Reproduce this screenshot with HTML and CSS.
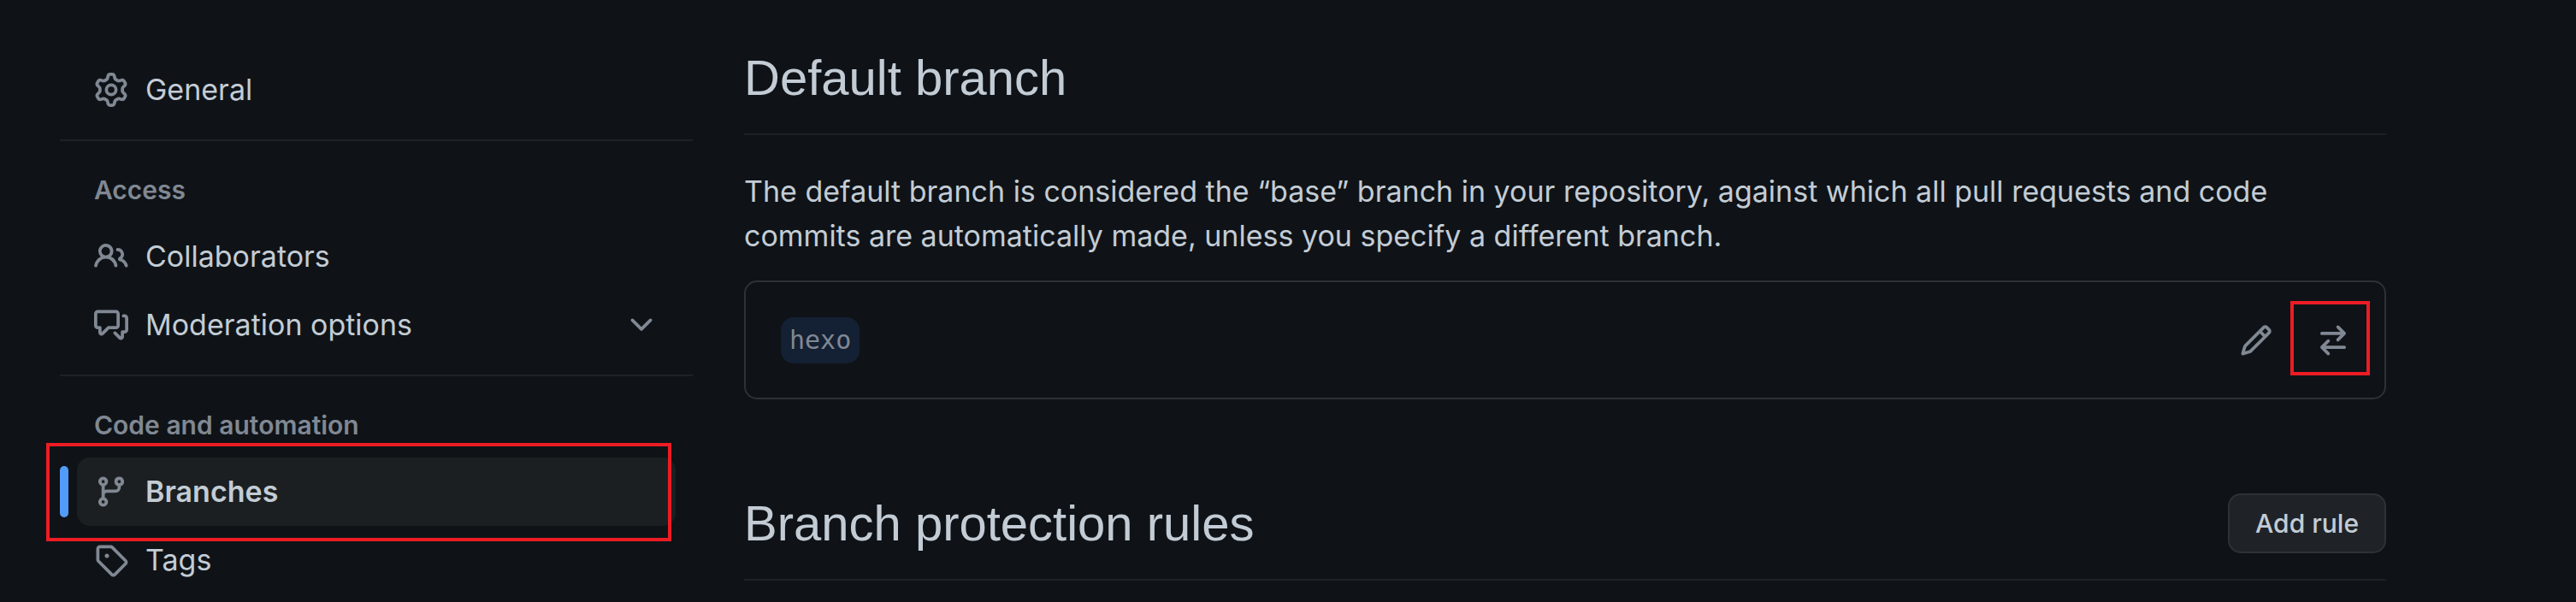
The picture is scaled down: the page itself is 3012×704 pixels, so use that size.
FILE: index.html
```html
<!DOCTYPE html>
<html lang="en">
<head>
<meta charset="utf-8">
<meta name="viewport" content="width=device-width, initial-scale=1">
<title>Branches</title>
<link rel="stylesheet" href="styles.css">
</head>
<body>
<div class="layout">
  <nav class="sidebar" aria-label="Settings">
    <ul class="nav-list">
      <li>
        <a class="nav-item" href="#general">
          <svg class="icon" viewBox="0 0 16 16" aria-hidden="true"><path d="M8 0a8.2 8.2 0 0 1 .701.031C9.444.095 9.99.645 10.16 1.29l.288 1.107c.018.066.079.158.212.224.231.114.454.243.668.386.123.082.233.09.299.071l1.103-.303c.644-.176 1.392.021 1.82.63.27.385.506.792.704 1.218.315.675.111 1.422-.364 1.891l-.814.806c-.049.048-.098.147-.088.294.016.257.016.515 0 .772-.01.147.038.246.088.294l.814.806c.475.469.679 1.216.364 1.891a7.977 7.977 0 0 1-.704 1.217c-.428.61-1.176.807-1.82.63l-1.102-.302c-.067-.019-.177-.011-.3.071a5.909 5.909 0 0 1-.668.386c-.133.066-.194.158-.211.224l-.29 1.106c-.168.646-.715 1.196-1.458 1.26a8.006 8.006 0 0 1-1.402 0c-.743-.064-1.289-.614-1.458-1.26l-.289-1.106c-.018-.066-.079-.158-.212-.224a5.738 5.738 0 0 1-.668-.386c-.123-.082-.233-.09-.299-.071l-1.103.303c-.644.176-1.392-.021-1.82-.63a8.12 8.12 0 0 1-.704-1.218c-.315-.675-.111-1.422.363-1.891l.815-.806c.05-.048.098-.147.088-.294a6.214 6.214 0 0 1 0-.772c.01-.147-.038-.246-.088-.294l-.815-.806C.635 6.045.431 5.298.746 4.623a7.92 7.92 0 0 1 .704-1.217c.428-.61 1.176-.807 1.82-.63l1.102.302c.067.019.177.011.3-.071.214-.143.437-.272.668-.386.133-.066.194-.158.211-.224l.29-1.106C6.009.645 6.556.095 7.299.03 7.53.01 7.764 0 8 0Zm-.571 1.525c-.036.003-.108.036-.137.146l-.289 1.105c-.147.561-.549.967-.998 1.189-.173.086-.34.183-.5.29-.417.278-.97.423-1.529.27l-1.103-.303c-.109-.03-.175.016-.195.045-.22.312-.412.644-.573.99-.014.031-.021.11.059.19l.815.806c.411.406.562.957.53 1.456a4.709 4.709 0 0 0 0 .582c.032.499-.119 1.05-.53 1.456l-.815.806c-.081.08-.073.159-.059.19.162.346.353.677.573.989.02.03.085.076.195.046l1.102-.303c.56-.153 1.113-.008 1.53.27.161.107.328.204.501.29.447.222.85.629.997 1.189l.289 1.105c.029.109.101.143.137.146a6.6 6.6 0 0 0 1.142 0c.036-.003.108-.036.137-.146l.289-1.105c.147-.561.549-.967.998-1.189.173-.086.34-.183.5-.29.417-.278.97-.423 1.529-.27l1.103.303c.109.029.175-.016.195-.045.22-.313.411-.644.573-.99.014-.031.021-.11-.059-.19l-.815-.806c-.411-.406-.562-.957-.53-1.456a4.709 4.709 0 0 0 0-.582c-.032-.499.119-1.05.53-1.456l.815-.806c.081-.08.073-.159.059-.19a6.464 6.464 0 0 0-.573-.989c-.02-.03-.085-.076-.195-.046l-1.102.303c-.56.153-1.113.008-1.53-.27a4.44 4.44 0 0 0-.501-.29c-.447-.222-.85-.629-.997-1.189l-.289-1.105c-.029-.11-.101-.143-.137-.146a6.6 6.6 0 0 0-1.142 0ZM11 8a3 3 0 1 1-6 0 3 3 0 0 1 6 0ZM9.5 8a1.5 1.5 0 1 0-3.001.001A1.5 1.5 0 0 0 9.5 8Z"/></svg>
          <span>General</span>
        </a>
      </li>
    </ul>
    <section class="nav-group">
      <h3 class="nav-title">Access</h3>
      <ul class="nav-list">
        <li>
          <a class="nav-item" href="#collaborators">
            <svg class="icon" viewBox="0 0 16 16" aria-hidden="true"><path d="M2 5.5a3.5 3.5 0 1 1 5.898 2.549 5.508 5.508 0 0 1 3.034 4.084.75.75 0 1 1-1.482.235 4 4 0 0 0-7.9 0 .75.75 0 0 1-1.482-.236A5.507 5.507 0 0 1 3.102 8.05 3.493 3.493 0 0 1 2 5.5ZM11 4a3.001 3.001 0 0 1 2.22 5.018 5.01 5.01 0 0 1 2.56 3.012.749.749 0 0 1-.885.954.752.752 0 0 1-.549-.514 3.507 3.507 0 0 0-2.522-2.372.75.75 0 0 1-.574-.73v-.352a.75.75 0 0 1 .416-.672A1.5 1.5 0 0 0 11 5.5.75.75 0 0 1 11 4Zm-5.5-.5a2 2 0 1 0-.001 3.999A2 2 0 0 0 5.5 3.5Z"/></svg>
            <span>Collaborators</span>
          </a>
        </li>
        <li>
          <button class="nav-item" type="button" aria-expanded="false">
            <svg class="icon" viewBox="0 0 16 16" aria-hidden="true"><path d="M1.75 1h8.5c.966 0 1.75.784 1.75 1.75v5.5A1.75 1.75 0 0 1 10.25 10H7.061l-2.574 2.573A1.458 1.458 0 0 1 2 11.543V10h-.25A1.75 1.75 0 0 1 0 8.25v-5.5C0 1.784.784 1 1.75 1ZM1.5 2.75v5.5c0 .138.112.25.25.25h1a.75.75 0 0 1 .75.75v2.19l2.72-2.72a.749.749 0 0 1 .53-.22h3.5a.25.25 0 0 0 .25-.25v-5.5a.25.25 0 0 0-.25-.25h-8.5a.25.25 0 0 0-.25.25Zm13 2a.25.25 0 0 0-.25-.25h-.5a.75.75 0 0 1 0-1.5h.5c.966 0 1.75.784 1.75 1.75v5.5A1.75 1.75 0 0 1 14.25 12H14v1.543a1.458 1.458 0 0 1-2.487 1.03L9.22 12.28a.749.749 0 0 1 .326-1.275.749.749 0 0 1 .734.215l2.22 2.22v-2.19a.75.75 0 0 1 .75-.75h1a.25.25 0 0 0 .25-.25Z"/></svg>
            <span>Moderation options</span>
            <svg class="icon chevron" viewBox="0 0 16 16" aria-hidden="true"><path d="M12.78 5.22a.749.749 0 0 1 0 1.06l-4.25 4.25a.749.749 0 0 1-1.06 0L3.22 6.28a.749.749 0 1 1 1.06-1.06L8 8.939l3.72-3.719a.749.749 0 0 1 1.06 0Z"/></svg>
          </button>
        </li>
      </ul>
    </section>
    <section class="nav-group">
      <h3 class="nav-title">Code and automation</h3>
      <ul class="nav-list">
        <li class="current">
          <a class="nav-item" href="#branches" aria-current="page">
            <svg class="icon" viewBox="0 0 16 16" aria-hidden="true"><path d="M9.5 3.25a2.25 2.25 0 1 1 3 2.122V6A2.5 2.5 0 0 1 10 8.5H6a1 1 0 0 0-1 1v1.128a2.251 2.251 0 1 1-1.5 0V5.372a2.25 2.25 0 1 1 1.5 0v1.836A2.493 2.493 0 0 1 6 7h4a1 1 0 0 0 1-1v-.628A2.25 2.25 0 0 1 9.5 3.25Zm-6 0a.75.75 0 1 0 1.5 0 .75.75 0 0 0-1.5 0Zm8.25-.75a.75.75 0 1 0 0 1.5.75.75 0 0 0 0-1.5ZM4.25 12a.75.75 0 1 0 0 1.5.75.75 0 0 0 0-1.5Z"/></svg>
            <span>Branches</span>
          </a>
        </li>
        <li>
          <a class="nav-item" href="#tags">
            <svg class="icon" viewBox="0 0 16 16" aria-hidden="true"><path d="M1 7.775V2.75C1 1.784 1.784 1 2.75 1h5.025c.464 0 .91.184 1.238.513l6.25 6.25a1.75 1.75 0 0 1 0 2.474l-5.026 5.026a1.75 1.75 0 0 1-2.474 0l-6.25-6.25A1.752 1.752 0 0 1 1 7.775Zm1.5 0c0 .066.026.13.073.177l6.25 6.25a.25.25 0 0 0 .354 0l5.025-5.025a.25.25 0 0 0 0-.354l-6.25-6.25a.25.25 0 0 0-.177-.073H2.75a.25.25 0 0 0-.25.25ZM6 5a1 1 0 1 1 0 2 1 1 0 0 1 0-2Z"/></svg>
            <span>Tags</span>
          </a>
        </li>
      </ul>
    </section>
  </nav>

  <main class="content">
    <section>
      <header class="section-head">
        <h2 class="section-title">Default branch</h2>
      </header>
      <p class="description">The default branch is considered the “base” branch in your repository, against which all pull requests and code commits are automatically made, unless you specify a different branch.</p>
      <div class="branch-box">
        <span class="branch-name">hexo</span>
        <div class="branch-actions">
          <button class="icon-button" type="button" aria-label="Rename branch">
            <svg class="icon" viewBox="0 0 16 16" aria-hidden="true"><path d="M11.013 1.427a1.75 1.75 0 0 1 2.474 0l1.086 1.086a1.75 1.75 0 0 1 0 2.474l-8.61 8.61c-.21.21-.47.364-.756.445l-3.251.93a.75.75 0 0 1-.927-.928l.929-3.25c.081-.286.235-.547.445-.758l8.61-8.61Zm.176 4.823L9.75 4.81l-6.286 6.287a.253.253 0 0 0-.064.108l-.558 1.953 1.953-.558a.253.253 0 0 0 .108-.064Zm1.238-3.763a.25.25 0 0 0-.354 0L10.811 3.75l1.439 1.44 1.263-1.263a.25.25 0 0 0 0-.354Z"/></svg>
          </button>
          <button class="icon-button marked" type="button" aria-label="Switch to another branch">
            <svg class="icon" viewBox="0 0 16 16" aria-hidden="true"><path d="M5.22 14.78a.75.75 0 0 0 1.06-1.06L4.56 12h8.69a.75.75 0 0 0 0-1.5H4.56l1.72-1.72a.75.75 0 0 0-1.06-1.06l-3 3a.75.75 0 0 0 0 1.06l3 3Zm5.56-6.5a.75.75 0 1 1-1.06-1.06l1.72-1.72H2.75a.75.75 0 0 1 0-1.5h8.69L9.72 2.28a.75.75 0 0 1 1.06-1.06l3 3a.75.75 0 0 1 0 1.06l-3 3Z"/></svg>
          </button>
        </div>
      </div>
    </section>
    <section class="rules">
      <header class="section-head">
        <h2 class="section-title">Branch protection rules</h2>
        <button class="button" type="button">Add rule</button>
      </header>
    </section>
  </main>
</div>
</body>
</html>
```

FILE: styles.css
```css
:root {
  --canvas: #0f1317;
  --text: #c3ccd5;
  --muted: #808893;
  --line: #1e2126;
  --border: #2e3136;
  --accent: #539bf9;
  --mark: #ed1c24;
}

* {
  box-sizing: border-box;
}

body {
  margin: 0;
  background: var(--canvas);
  color: var(--text);
  font: 34px/52px Inter, "Liberation Sans", sans-serif;
}

h2,
h3,
p,
ul {
  margin: 0;
  padding: 0;
}

ul {
  list-style: none;
}

button {
  font: inherit;
  color: inherit;
  cursor: pointer;
}

.layout {
  display: grid;
  grid-template-columns: 740px minmax(0, 1fr);
  gap: 60px;
  padding: 46px 222px 0 70px;
}

.icon {
  flex: none;
  width: 40px;
  height: 40px;
  fill: var(--muted);
}

/* Sidebar */

.sidebar {
  padding-top: 19px;
}

.nav-list {
  padding: 0 20px;
}

.nav-item {
  display: flex;
  align-items: center;
  gap: 20px;
  width: 100%;
  height: 80px;
  padding: 0 20px;
  border: 0;
  border-radius: 15px;
  background: none;
  color: var(--text);
  text-align: left;
  text-decoration: none;
}

.chevron {
  margin-left: auto;
}

.nav-group {
  margin-top: 18px;
  padding-top: 20px;
  border-top: 2px solid var(--line);
}

.nav-title {
  padding: 15px 40px;
  color: var(--muted);
  font-size: 30px;
  font-weight: 600;
  line-height: 45px;
}

.current {
  position: relative;
}

.current .nav-item {
  background: #1b1f21;
  font-weight: 600;
}

.current::before {
  content: "";
  position: absolute;
  top: 10px;
  bottom: 10px;
  left: -20px;
  width: 10px;
  border-radius: 5px;
  background: var(--accent);
}

/* Red outline drawn over the current item */
.current::after {
  content: "";
  position: absolute;
  inset: -17px 5px -18px -36px;
  border: 4px solid var(--mark);
  pointer-events: none;
}

/* Content */

.section-head {
  display: flex;
  align-items: center;
  justify-content: space-between;
  padding-bottom: 20px;
  border-bottom: 2px solid var(--line);
}

.section-title {
  font-family: "Liberation Sans", Arial, sans-serif;
  font-size: 58px;
  font-weight: 400;
  line-height: 90px;
}

.description {
  margin-top: 40px;
}

.branch-box {
  display: flex;
  align-items: center;
  justify-content: space-between;
  margin-top: 26px;
  padding: 25px 18px 25px 41px;
  border: 2px solid var(--border);
  border-radius: 15px;
}

.branch-name {
  padding: 5px 10px;
  border-radius: 15px;
  background: #142033;
  color: var(--muted);
  font: 30px/44px "DejaVu Sans Mono", monospace;
}

.branch-actions {
  display: flex;
  gap: 5px;
}

.icon-button {
  position: relative;
  display: flex;
  align-items: center;
  justify-content: center;
  width: 85px;
  height: 85px;
  padding: 0;
  border: 0;
  background: none;
}

/* Red outline drawn over the switch button */
.marked::after {
  content: "";
  position: absolute;
  inset: -3px -1px 1px -7px;
  border: 4px solid var(--mark);
  pointer-events: none;
}

.rules {
  margin-top: 100px;
}

.button {
  height: 70px;
  padding: 0 30px;
  border: 2px solid var(--border);
  border-radius: 15px;
  background: #1f2328;
  font-size: 30px;
  font-weight: 500;
}
```
